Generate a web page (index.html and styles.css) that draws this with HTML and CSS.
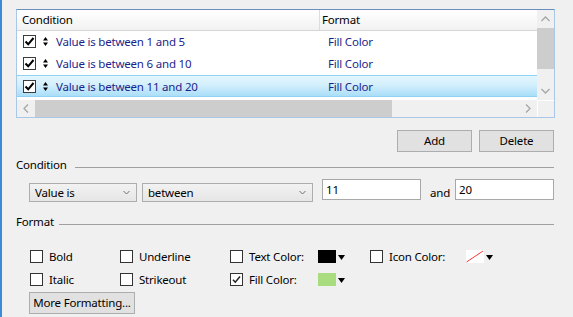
FILE: index.html
```html
<!DOCTYPE html>
<html>
<head>
<meta charset="utf-8">
<link rel="stylesheet" href="styles.css">
</head>
<body>
<div class="win">
  <div class="list">
    <div class="list-main">
      <div class="lh">
        <div class="c1">Condition</div>
        <div class="c2">Format</div>
      </div>
      <div class="row">
        <div class="c1">
          <span class="cb"><svg width="11" height="11" viewBox="0 0 11 11"><path d="M1.5 5.5 L4.2 8.3 L9.5 2" fill="none" stroke="#000" stroke-width="2"/></svg></span>
          <svg class="sort" width="5" height="9" viewBox="0 0 5 9"><polygon points="2.5,0 5,3.5 0,3.5" fill="#000"/><polygon points="0,5.5 5,5.5 2.5,9" fill="#000"/></svg>
          <span class="txt">Value is between 1 and 5</span>
        </div>
        <div class="c2">Fill Color</div>
      </div>
      <div class="row">
        <div class="c1">
          <span class="cb"><svg width="11" height="11" viewBox="0 0 11 11"><path d="M1.5 5.5 L4.2 8.3 L9.5 2" fill="none" stroke="#000" stroke-width="2"/></svg></span>
          <svg class="sort" width="5" height="9" viewBox="0 0 5 9"><polygon points="2.5,0 5,3.5 0,3.5" fill="#000"/><polygon points="0,5.5 5,5.5 2.5,9" fill="#000"/></svg>
          <span class="txt">Value is between 6 and 10</span>
        </div>
        <div class="c2">Fill Color</div>
      </div>
      <div class="row sel-row">
        <div class="c1">
          <span class="cb"><svg width="11" height="11" viewBox="0 0 11 11"><path d="M1.5 5.5 L4.2 8.3 L9.5 2" fill="none" stroke="#000" stroke-width="2"/></svg></span>
          <svg class="sort" width="5" height="9" viewBox="0 0 5 9"><polygon points="2.5,0 5,3.5 0,3.5" fill="#000"/><polygon points="0,5.5 5,5.5 2.5,9" fill="#000"/></svg>
          <span class="txt">Value is between 11 and 20</span>
        </div>
        <div class="c2">Fill Color</div>
      </div>
    </div>
    <div class="vscroll">
      <div class="sb-btn"><svg width="9" height="6" viewBox="0 0 9 6"><polyline points="0.5,5 4.5,1 8.5,5" fill="none" stroke="#a6a6a6" stroke-width="1.3"/></svg></div>
      <div class="vthumb"></div>
      <div class="vtrack"></div>
      <div class="sb-btn"><svg width="9" height="6" viewBox="0 0 9 6"><polyline points="0.5,1 4.5,5 8.5,1" fill="none" stroke="#a6a6a6" stroke-width="1.3"/></svg></div>
    </div>
    <div class="hscroll">
      <div class="sb-hbtn"><svg width="6" height="9" viewBox="0 0 6 9"><polyline points="5,0.5 1,4.5 5,8.5" fill="none" stroke="#a6a6a6" stroke-width="1.3"/></svg></div>
      <div class="hthumb"></div>
      <div class="htrack"></div>
      <div class="sb-hbtn"><svg width="6" height="9" viewBox="0 0 6 9"><polyline points="1,0.5 5,4.5 1,8.5" fill="none" stroke="#a6a6a6" stroke-width="1.3"/></svg></div>
    </div>
    <div class="corner"></div>
  </div>

  <div class="btn-row">
    <button class="btn">Add</button>
    <button class="btn">Delete</button>
  </div>

  <div class="sec"><span>Condition</span><span class="line"></span></div>
  <div class="cond-row">
    <div class="sel sel1"><span>Value is</span><svg width="7" height="5" viewBox="0 0 7 5"><polyline points="0.5,1 3.5,4 6.5,1" fill="none" stroke="#707070" stroke-width="1"/></svg></div>
    <div class="sel sel2"><span>between</span><svg width="7" height="5" viewBox="0 0 7 5"><polyline points="0.5,1 3.5,4 6.5,1" fill="none" stroke="#707070" stroke-width="1"/></svg></div>
    <div class="inp inp1">11</div>
    <div class="and">and</div>
    <div class="inp inp2">20</div>
  </div>

  <div class="sec sec-fmt"><span>Format</span><span class="line"></span></div>
  <div class="checks">
    <div class="ck"><span class="box"></span><span>Bold</span></div>
    <div class="ck"><span class="box"></span><span>Underline</span></div>
    <div class="ck"><span class="box"></span><span class="lbl lbl-text">Text Color:</span><span class="swatch black"></span><svg class="drop" width="7" height="5" viewBox="0 0 7 5"><polygon points="0,0 7,0 3.5,5" fill="#000"/></svg></div>
    <div class="ck"><span class="box"></span><span class="lbl lbl-icon">Icon Color:</span><span class="swatch icon"><svg width="18" height="13" viewBox="0 0 18 13"><line x1="0.5" y1="12" x2="17" y2="1" stroke="#f03a3a" stroke-width="1"/></svg></span><svg class="drop" width="7" height="5" viewBox="0 0 7 5"><polygon points="0,0 7,0 3.5,5" fill="#000"/></svg></div>
    <div class="ck"><span class="box"></span><span>Italic</span></div>
    <div class="ck"><span class="box"></span><span>Strikeout</span></div>
    <div class="ck"><span class="box"><svg width="11" height="11" viewBox="0 0 11 11"><path d="M2 5.8 L4.3 8.2 L9 2.5" fill="none" stroke="#222" stroke-width="1.5"/></svg></span><span class="lbl lbl-text">Fill Color:</span><span class="swatch green"></span><svg class="drop" width="7" height="5" viewBox="0 0 7 5"><polygon points="0,0 7,0 3.5,5" fill="#000"/></svg></div>
    <div></div>
  </div>
  <button class="btn more">More Formatting...</button>
</div>
</body>
</html>
```
FILE: styles.css
```css
html, body {
  margin: 0;
  background: #f0f0f0;
}
body {
  font-family: "Segoe UI", "Noto Sans", sans-serif;
  font-size: 11.5px;
  letter-spacing: -0.2px;
  color: #000;
  white-space: nowrap;
}
.win {
  height: 317px;
  box-sizing: border-box;
  border-left: 2px solid #3a8ad8;
  padding: 9px 18px 0 14px;
  overflow: hidden;
}

/* list */
.list {
  height: 109px;
  box-sizing: border-box;
  border: 1px solid #a9c8e6;
  border-top-color: #6a8fba;
  background: #fff;
  display: grid;
  grid-template-columns: 1fr 17px;
  grid-template-rows: 1fr 17px;
}
.list-main {
  overflow: hidden;
}
.lh {
  height: 21px;
  box-sizing: border-box;
  border-bottom: 1px solid #d5d5d5;
  background: linear-gradient(#ffffff, #f2f2f2);
  display: flex;
  line-height: 19px;
}
.lh .c1 {
  width: 303px;
  box-sizing: border-box;
  padding-left: 5px;
  border-right: 1px solid #dcdcdc;
}
.lh .c2 {
  padding-left: 2px;
}
.row {
  height: 22px;
  box-sizing: border-box;
  display: flex;
  align-items: center;
  color: #1c1f8c;
  padding-bottom: 1px;
}
.row:first-of-type {
  height: 21px;
}
.row .c1 {
  width: 303px;
  box-sizing: border-box;
  padding-left: 6px;
  display: flex;
  align-items: center;
}
.row .c2 {
  padding-left: 8px;
}
.sel-row {
  border-top: 1px solid #8fd1f3;
  border-bottom: 1px solid #8fd1f3;
  background: linear-gradient(#e4f6fe, #d3effc 45%, #a9def8);
  padding-bottom: 0;
}
.cb {
  width: 13px;
  height: 13px;
  box-sizing: border-box;
  border: 1px solid #3c3c3c;
  background: #fff;
  display: flex;
  align-items: center;
  justify-content: center;
  margin-right: 7px;
}
.sort {
  margin-right: 8px;
}

.vscroll {
  background: #f0f0f0;
  display: flex;
  flex-direction: column;
}
.sb-btn {
  height: 18px;
  display: flex;
  align-items: center;
  justify-content: center;
}
.vthumb {
  height: 41px;
  background: #cdcdcd;
}
.vtrack {
  flex: 1;
}
.hscroll {
  background: #f0f0f0;
  display: flex;
}
.sb-hbtn {
  width: 18px;
  display: flex;
  align-items: center;
  justify-content: center;
}
.hthumb {
  width: 357px;
  background: #cdcdcd;
}
.htrack {
  flex: 1;
}
.corner {
  background: #f0f0f0;
  box-shadow: inset 1px 1px 0 #fff;
}

/* buttons */
.btn-row {
  display: flex;
  justify-content: flex-end;
  gap: 7px;
  margin-top: 12px;
  padding-right: 1px;
}
.btn {
  width: 75px;
  height: 22px;
  box-sizing: border-box;
  border: 1px solid #adadad;
  background: #e1e1e1;
  font: inherit;
  letter-spacing: inherit;
  color: #000;
  padding: 0;
  line-height: 20px;
  text-align: center;
  white-space: nowrap;
}

/* section titles */
.sec {
  display: flex;
  align-items: center;
  height: 16px;
  line-height: 16px;
  margin-top: 5px;
  margin-right: 1px;
}
.sec .line {
  flex: 1;
  height: 1px;
  background: #a0a0a0;
  margin-left: 8px;
  margin-top: 4px;
}
.sec-fmt {
  margin-top: 12px;
}
.sec-fmt .line {
  margin-left: 5px;
}

/* condition row */
.cond-row {
  display: flex;
  align-items: flex-start;
  margin-top: 6px;
  padding-left: 13px;
  margin-right: 1px;
}
.sel {
  height: 19px;
  margin-top: 4px;
  box-sizing: border-box;
  border: 1px solid #adadad;
  background: linear-gradient(#f2f2f2, #e6e6e6);
  display: flex;
  align-items: center;
  justify-content: space-between;
  padding: 0 6px 0 5px;
  line-height: 17px;
}
.sel1 {
  width: 108px;
}
.sel2 {
  width: 171px;
  margin-left: 5px;
}
.inp {
  width: 99px;
  height: 21px;
  box-sizing: border-box;
  border: 1px solid #a8a8a8;
  background: #fff;
  padding: 0 3px;
  line-height: 19px;
}
.inp1 {
  margin-left: 9px;
}
.and {
  margin-left: 9px;
  margin-top: 4px;
  line-height: 19px;
}
.inp2 {
  margin-left: auto;
}

/* format checks */
.checks {
  display: grid;
  grid-template-columns: 90px 110px 140px auto;
  grid-auto-rows: 17px;
  row-gap: 6px;
  margin-top: 18px;
  padding-left: 14px;
}
.ck {
  display: flex;
  align-items: center;
}
.box {
  width: 13px;
  height: 13px;
  box-sizing: border-box;
  border: 1px solid #333;
  background: #fff;
  margin-right: 6px;
  display: flex;
  align-items: center;
  justify-content: center;
}
.lbl-text {
  width: 69px;
}
.lbl-icon {
  width: 77px;
}
.swatch {
  width: 18px;
  height: 13px;
  display: block;
}
.swatch svg {
  display: block;
}
.black {
  background: #000;
}
.green {
  background: #a8dc7e;
}
.icon {
  background: #fff;
}
.drop {
  margin-left: 2px;
  margin-top: 1px;
}
.more {
  width: 106px;
  margin-top: 4px;
  margin-left: 13px;
  display: block;
}
```
